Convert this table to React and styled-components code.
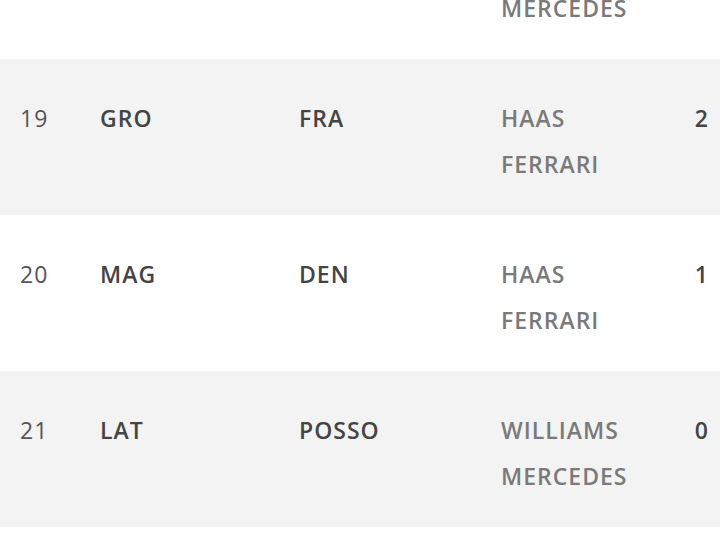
import React from 'react'
import styled, { createGlobalStyle } from 'styled-components'

const Global = createGlobalStyle`
  html, body { margin: 0; padding: 0; background: #fff; }
  body { font-family: "Open Sans", "Noto Sans", sans-serif; overflow: hidden; }
`

const Table = styled.div`
  margin-top: -97px;
  width: 720px;
`

const Row = styled.div`
  display: grid;
  grid-template-columns: 80px 199px 202px 1fr auto;
  align-items: start;
  height: 156px;
  box-sizing: border-box;
  padding: 36px 11px 0 20px;
  background: ${({ $shaded }) => ($shaded ? '#f3f3f3' : '#fff')};
  font-size: 23px;
  line-height: 46px;
  letter-spacing: 1px;
`

const Pos = styled.div`
  color: #555;
  font-weight: 400;
`

const Code = styled.div`
  color: #444;
  font-weight: 600;
`

const Team = styled.div`
  color: #7a7a7a;
  font-weight: 600;
  display: flex;
  flex-direction: column;
`

const Points = styled.div`
  color: #444;
  font-weight: 600;
  text-align: right;
`

const rows = [
  { pos: 18, driver: 'BOT', nat: 'FIN', team: ['WILLIAMS', 'MERCEDES'], pts: 4 },
  { pos: 19, driver: 'GRO', nat: 'FRA', team: ['HAAS', 'FERRARI'], pts: 2 },
  { pos: 20, driver: 'MAG', nat: 'DEN', team: ['HAAS', 'FERRARI'], pts: 1 },
  { pos: 21, driver: 'LAT', nat: 'POSSO', team: ['WILLIAMS', 'MERCEDES'], pts: 0 },
]

export default function App() {
  return (
    <>
      <Global />
      <Table>
        {rows.map((r, i) => (
          <Row key={r.pos} $shaded={i % 2 === 1}>
            <Pos>{r.pos}</Pos>
            <Code>{r.driver}</Code>
            <Code>{r.nat}</Code>
            <Team>
              {r.team.map(t => <span key={t}>{t}</span>)}
            </Team>
            <Points>{r.pts}</Points>
          </Row>
        ))}
      </Table>
    </>
  )
}
